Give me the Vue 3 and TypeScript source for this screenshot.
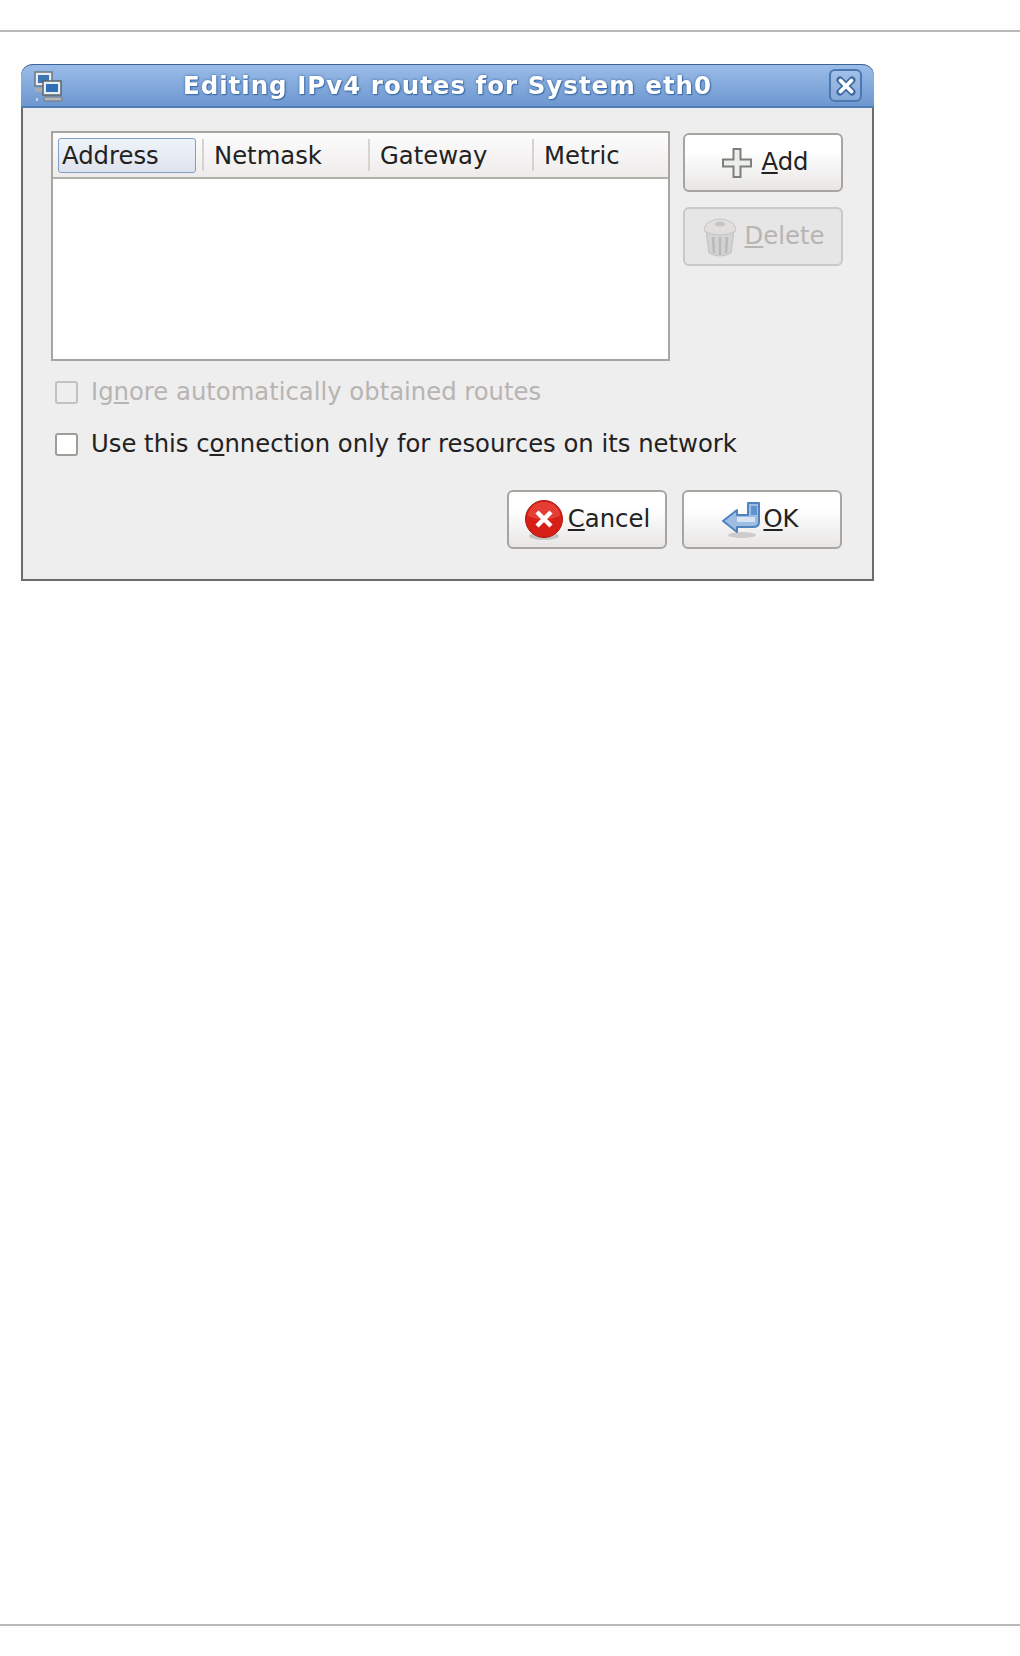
<template>
  <div class="page">
    <hr class="rule" />
    <div class="dialog">
      <div class="titlebar">
        <svg class="net-icon" width="32" height="32" viewBox="0 0 32 32">
          <rect x="2" y="1" width="17" height="14" fill="#e8edf2" stroke="#6d7680" stroke-width="1.5" />
          <rect x="5" y="4" width="11" height="8" fill="#3f74b5" />
          <rect x="2" y="17" width="14" height="4" fill="#a6abb0" />
          <rect x="10" y="10" width="18" height="14" fill="#e8edf2" stroke="#5b646e" stroke-width="1.5" />
          <rect x="13" y="13" width="12" height="8" fill="#2f6fb8" />
          <rect x="11" y="26" width="18" height="4" rx="1" fill="#b3b7ba" stroke="#70777d" />
          <rect x="3" y="27" width="2" height="3" fill="#c3d4ea" />
        </svg>
        <span class="title">Editing IPv4 routes for System eth0</span>
        <span class="close">
          <svg width="24" height="24" viewBox="0 0 24 24">
            <path d="M6 6 L18 18 M18 6 L6 18" stroke="#3d6aa3" stroke-width="7" stroke-linecap="round" />
            <path d="M6.500 6.500 L17.500 17.500 M17.500 6.500 L6.500 17.500" stroke="#fff" stroke-width="3.800" stroke-linecap="round" />
          </svg>
        </span>
      </div>

      <div class="content">
        <div class="top">
          <div class="list">
            <div class="head">
              <div class="col first"><span class="focus">Address</span></div>
              <i class="sep"></i>
              <div class="col second">Netmask</div>
              <i class="sep"></i>
              <div class="col third">Gateway</div>
              <i class="sep"></i>
              <div class="col">Metric</div>
            </div>
          </div>
          <div class="side">
            <button class="btn add">
              <svg width="32" height="32" viewBox="0 0 32 32">
                <path d="M12.500 2 H19.500 V12.500 H30 V19.500 H19.500 V30 H12.500 V19.500 H2 V12.500 H12.500 Z" fill="#eceeec" stroke="#7b8079" stroke-width="2" />
              </svg>
              <span class="gap"><u>A</u>dd</span>
            </button>
            <button class="btn off">
              <svg width="36" height="40" viewBox="0 0 36 40">
                <path d="M4 14 L7 36 Q18 42 29 36 L32 14 Z" fill="#d2d2d2" stroke="#c2c2c2" />
                <path d="M11 20 L12 36 M18 20 V38 M25 20 L24 36" stroke="#bababa" stroke-width="2.500" />
                <path d="M2 14 Q2 3 18 2 Q34 3 34 14 Q18 22 2 14 Z" fill="#e0dfde" stroke="#c6c6c6" />
                <ellipse cx="18" cy="7" rx="5" ry="2.500" fill="#c4c4c4" />
              </svg>
              <span class="gap small"><u>D</u>elete</span>
            </button>
          </div>
        </div>

        <label class="check off">
          <i class="box"></i>
          <span>Ig<u>n</u>ore automatically obtained routes</span>
        </label>
        <label class="check">
          <i class="box"></i>
          <span>Use this c<u>o</u>nnection only for resources on its network</span>
        </label>

        <div class="actions">
          <button class="btn">
            <svg width="40" height="42" viewBox="0 0 40 42">
              <ellipse cx="20" cy="37" rx="15" ry="4" fill="#a9a9a9" opacity="0.6" />
              <circle cx="20" cy="20" r="18.500" fill="#d81f17" stroke="#a81410" />
              <path d="M4 17 A16 14 0 0 1 36 17 Q20 24 4 17 Z" fill="#f0584f" opacity="0.55" />
              <path d="M13 13 L27 27 M27 13 L13 27" stroke="#fff" stroke-width="4.500" />
            </svg>
            <span class="tight"><u>C</u>ancel</span>
          </button>
          <button class="btn ok">
            <svg width="40" height="40" viewBox="0 0 40 40">
              <ellipse cx="20" cy="35" rx="14" ry="3" fill="#b5b5b5" opacity="0.6" />
              <path d="M1 21 L15 10 V15 H26 V3 H37 V22 Q37 27 31 27 H15 V32 Z" fill="#9dbde2" stroke="#4f83bf" stroke-width="2" stroke-linejoin="round" />
              <rect x="29" y="6" width="6" height="9" fill="#5f93cd" />
              <path d="M15 17 H33 V22 H15 Z" fill="#d6e3f2" />
            </svg>
            <span class="ok-label"><u>O</u>K</span>
          </button>
        </div>
      </div>
    </div>
    <hr class="rule bottom" />
  </div>
</template>

<script setup lang="ts">
</script>

<style scoped>
.page {
  height: 1656px;
  display: flex;
  flex-direction: column;
  background: #fefefe;
  font-family: "DejaVu Sans", sans-serif;
  font-size: 24.3px;
  color: #222;
  overflow: hidden;
}

.rule {
  margin: 30px 0 0;
  height: 2px;
  border: none;
  background: #b8b8b8;
  flex: none;
}

.rule.bottom {
  margin: auto 0 30px;
}

.dialog {
  width: 853px;
  height: 517px;
  margin: 32px 0 0 21px;
  display: flex;
  flex-direction: column;
  box-sizing: border-box;
  background: #eeeeee;
  border: 2px solid #6b6b6b;
  border-top: none;
  border-radius: 12px 12px 0 0;
  filter: blur(0.6px);
}

.titlebar {
  height: 44px;
  margin: 0 -2px;
  flex: none;
  display: flex;
  align-items: center;
  justify-content: center;
  position: relative;
  box-sizing: border-box;
  background: linear-gradient(#9abce8, #6d97cf);
  border-top: 1px solid #3a6496;
  border-bottom: 2px solid #4f7db5;
  border-radius: 12px 12px 0 0;
}

.title {
  font-size: 24.5px;
  font-weight: bold;
  letter-spacing: 1px;
  color: #fff;
  text-shadow: 0 0 3px #3c6aa5, 1px 1px 1px #3c6aa5;
}

.net-icon {
  position: absolute;
  left: 12px;
  top: 6px;
}

.close {
  position: absolute;
  right: 12px;
  top: 4px;
  width: 33px;
  height: 33px;
  display: flex;
  align-items: center;
  justify-content: center;
  box-sizing: border-box;
  border: 2px solid #4a78b0;
  border-radius: 6px;
  background: rgba(255, 255, 255, 0.14);
}

.content {
  flex: 1;
  display: flex;
  flex-direction: column;
  padding: 23px 30px 0 28px;
}

.top {
  display: flex;
  gap: 13px;
}

.list {
  width: 619px;
  height: 230px;
  flex: none;
  box-sizing: border-box;
  background: #fff;
  border: 2px solid #a8a4a0;
}

.head {
  height: 46px;
  box-sizing: border-box;
  display: flex;
  align-items: center;
  border-bottom: 2px solid #b3afab;
  background: linear-gradient(#fdfcfc, #eeeceb);
}

.col {
  box-sizing: border-box;
  padding-left: 10px;
}

.first {
  width: 149px;
  padding-left: 5px;
}

.second {
  width: 164px;
}

.third {
  width: 162px;
}

.focus {
  display: block;
  width: 138px;
  height: 35px;
  line-height: 33px;
  box-sizing: border-box;
  padding-left: 3px;
  border: 1px solid #7f9fc8;
  border-radius: 3px;
  background: linear-gradient(#eef3fa, #dfe3ee);
}

.sep {
  width: 2px;
  height: 32px;
  background: #d6d3d0;
  flex: none;
}

.side {
  display: flex;
  flex-direction: column;
  gap: 15px;
  padding-top: 2px;
}

.btn {
  width: 160px;
  height: 59px;
  padding: 0;
  display: flex;
  align-items: center;
  justify-content: center;
  box-sizing: border-box;
  font: inherit;
  color: inherit;
  border: 2px solid #a8a4a0;
  border-radius: 6px;
  background: linear-gradient(#ffffff 30%, #e8e6e5);
}

.btn span {
  margin-bottom: 2px;
}

.btn.add {
  padding-left: 4px;
}

.btn.ok {
  padding-right: 3px;
}

.btn.off {
  color: #b8b4b2;
  background: #e6e6e6;
  border-color: #cbc8c6;
}

.gap {
  margin-left: 8px;
}

.small {
  margin-left: 7px;
}

.tight {
  margin-left: 4px;
}

.ok-label {
  margin-left: 1px;
}

.check {
  display: flex;
  align-items: center;
  gap: 13px;
  height: 32px;
  margin-left: 4px;
}

.check span {
  margin-bottom: 2px;
}

.check.off {
  margin-top: 15px;
  color: #b8b4b2;
}

.check + .check {
  margin-top: 20px;
}

.box {
  width: 23px;
  height: 23px;
  flex: none;
  box-sizing: border-box;
  background: #fff;
  border: 2px solid #a09c98;
  border-radius: 3px;
}

.check.off .box {
  background: #eeeeee;
  border-color: #c4c1be;
}

.actions {
  display: flex;
  justify-content: flex-end;
  gap: 15px;
  margin-top: 30px;
}
</style>

<style>
html,
body {
  background: #fefefe;
}
</style>
